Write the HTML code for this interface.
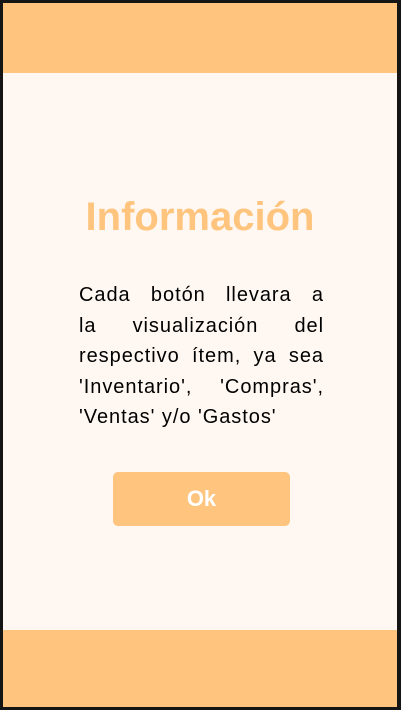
<!DOCTYPE html>
<html><head><meta charset="utf-8"><style>
html,body{margin:0;padding:0;}
body{width:401px;height:710px;background:#151515;position:relative;overflow:hidden;font-family:"Liberation Sans","DejaVu Sans",sans-serif;}
.frame{position:absolute;left:3px;top:3px;width:394px;height:704px;background:#fff8f2;}
.top{position:absolute;left:0;top:0;width:100%;height:70px;background:#ffc47e;}
.bot{position:absolute;left:0;top:627px;width:100%;height:77px;background:#ffc47e;}
h1{position:absolute;left:0;width:100%;top:190px;margin:0;text-align:center;color:#ffc47e;font-size:40px;font-weight:bold;line-height:48px;}
.txt{position:absolute;left:76px;top:277px;width:245px;font-size:20px;line-height:30.5px;color:#000;letter-spacing:0.95px;}
.txt div{text-align:justify;text-align-last:justify;white-space:nowrap;}
.txt div.l{text-align:left;text-align-last:left;}
.btn{position:absolute;left:110px;top:469px;width:177px;height:54px;background:#ffc47e;border-radius:5px;color:#fff;font-weight:bold;font-size:22px;text-align:center;line-height:54px;}
</style></head><body>
<div class="frame">
<div class="top"></div>
<h1>Información</h1>
<div class="txt">
<div>Cada botón llevara a</div>
<div>la visualización del</div>
<div>respectivo ítem, ya sea</div>
<div>'Inventario', 'Compras',</div>
<div class="l">'Ventas' y/o 'Gastos'</div>
</div>
<div class="btn">Ok</div>
<div class="bot"></div>
</div>
</body></html>
